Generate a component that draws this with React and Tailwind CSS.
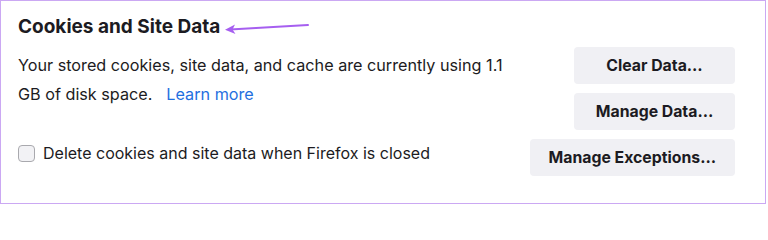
import React from 'react';

const Arrow = () => (
  <svg width="88" height="12" viewBox="0 0 88 12" className="ml-[4px] mt-[2px]">
    <path d="M6 7.5 L84 3" stroke="#a65ff0" strokeWidth="2" strokeLinecap="round" fill="none" />
    <path d="M1 7.8 L11 2.5 L8.5 7.6 L11.5 12 Z" fill="#a65ff0" />
  </svg>
);

const Button = ({ children, className = '' }) => (
  <button className={`h-[37px] rounded-[4px] bg-[#f0f0f4] text-[15.8px] font-bold text-[#1c1b22] ${className}`}>
    {children}
  </button>
);

export default function App() {
  return (
    <div className="w-[768px] h-[204px] bg-white font-['Inter',sans-serif] text-[#1c1b22]">
      <div className="w-[766px] h-[204px] border border-[#cba8f3] pl-[17px] pr-[30px] pt-[13px]">
        <div className="flex items-center">
          <h1 className="text-[19px] font-bold leading-[26px]">Cookies and Site Data</h1>
          <Arrow />
        </div>

        <div className="flex justify-between mt-[7px]">
          <div className="text-[16.2px] leading-[29px] mt-[4px]">
            <p>Your stored cookies, site data, and cache are currently using 1.1</p>
            <p>
              <span>GB of disk space.</span>
              <a className="ml-[14px] text-[#1f6fdf]">Learn more</a>
            </p>
          </div>
          <div className="flex flex-col gap-[9px]">
            <Button className="w-[161px]">Clear Data…</Button>
            <Button className="w-[161px]">Manage Data…</Button>
          </div>
        </div>

        <div className="flex justify-between items-center mt-[9px]">
          <label className="flex items-center gap-[8px] text-[16px] -mt-[9px]">
            <span className="w-[17px] h-[17px] rounded-[4px] border border-[#a9a9ae] bg-[#f2f2f5]" />
            Delete cookies and site data when Firefox is closed
          </label>
          <Button className="px-[19px]">Manage Exceptions…</Button>
        </div>
      </div>
    </div>
  );
}
